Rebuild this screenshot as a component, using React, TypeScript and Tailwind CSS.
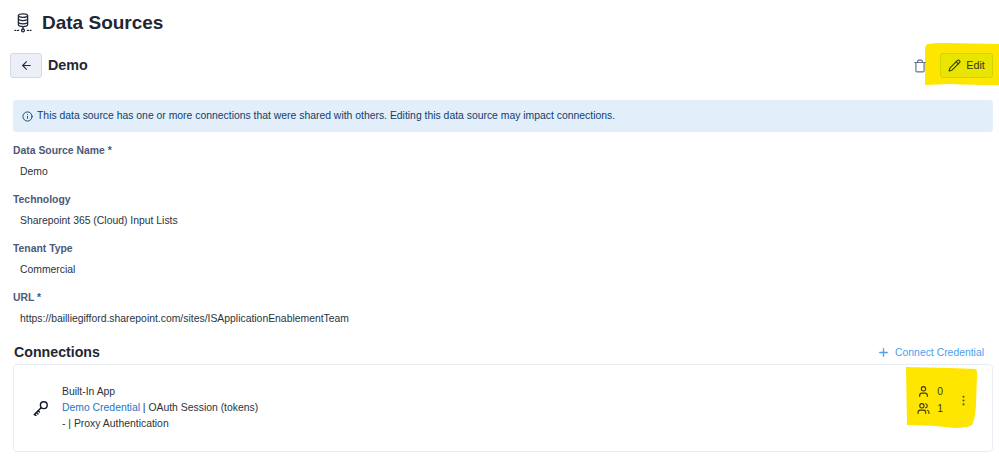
import { ArrowLeft, EllipsisVertical, Info, Pencil, Plus, Trash, User, Users } from 'lucide-react'

const FIELDS = [
  { label: 'Data Source Name *', value: 'Demo' },
  { label: 'Technology', value: 'Sharepoint 365 (Cloud) Input Lists' },
  { label: 'Tenant Type', value: 'Commercial' },
  { label: 'URL *', value: 'https://bailliegifford.sharepoint.com/sites/ISApplicationEnablementTeam' },
]

function DatabaseNodeIcon() {
  return (
    <svg width="18" height="20" viewBox="0 0 18 20" fill="none" stroke="#1f2937" strokeWidth="1.3" strokeLinecap="round">
      <ellipse cx="9" cy="2.6" rx="4.6" ry="1.8" />
      <path d="M4.4 2.6v9.2c0 1 2 1.8 4.6 1.8s4.6-.8 4.6-1.8V2.6" />
      <path d="M4.4 5.8c0 1 2 1.8 4.6 1.8s4.6-.8 4.6-1.8" />
      <path d="M4.4 9c0 1 2 1.8 4.6 1.8s4.6-.8 4.6-1.8" />
      <path d="M9 13.6v2.4" />
      <circle cx="9" cy="17.4" r="1.4" />
      <path d="M1 17.4h.8M3.6 17.4h1M13.4 17.4h1M16.2 17.4h.8" />
    </svg>
  )
}

function KeyIcon() {
  return (
    <svg width="16" height="16" viewBox="0 0 16 16" fill="none" stroke="#111827" strokeWidth="1.4" strokeLinecap="round">
      <circle cx="10.8" cy="5.2" r="3.4" />
      <path d="M8.4 7.6 1.4 14.4" />
      <path d="M3.4 12.4 5 14M1.4 14.4 3 15.6M5.2 10.8l1.2 1.2" />
    </svg>
  )
}

export default function App() {
  return (
    <div className="relative h-[464px] w-[999px] overflow-hidden bg-white font-['Liberation_Sans',sans-serif] text-[#1f2937]">
      {/* marker highlights */}
      <svg className="absolute left-0 top-0" width="999" height="464" viewBox="0 0 999 464">
        <path d="M928 44 Q934 43 945 43 L999 44 L999 85 Q970 85 950 84 L925 85 L925 50 Q925 45 928 44Z" fill="#ffe600" />
        <path d="M906 367 L950 368 L976 369 Q977 370 977 374 L976 405 Q975 420 972 425 Q968 428 955 428 L935 426 L907 425 Z" fill="#ffe600" />
      </svg>

      <div className="relative flex h-[45px] items-center gap-[10px] pl-[14px] pt-[1px]">
        <DatabaseNodeIcon />
        <h1 className="text-[19px] font-bold text-[#1f2733]">Data Sources</h1>
      </div>

      <div className="relative mt-[9px] flex h-[23px] items-center pl-[10px] pr-[6px]">
        <button className="flex h-[25px] w-[32px] items-center justify-center rounded-[3px] border border-[#d5d9e6] bg-[#eceff8]">
          <ArrowLeft className="h-[13px] w-[13px] text-[#1f2937]" />
        </button>
        <span className="ml-[6px] text-[14.3px] font-bold text-[#1f2733]">Demo</span>
        <div className="ml-auto flex items-center gap-[13px]">
          <Trash className="h-[14px] w-[14px] text-[#64708a]" />
          <button className="flex h-[25px] w-[53px] items-center justify-center gap-[5px] rounded-[3px] border border-[#d3d300] bg-[#e8e600] text-[10.8px] text-[#2e3a20]">
            <Pencil className="h-[13px] w-[13px]" />
            Edit
          </button>
        </div>
      </div>

      <div className="relative mx-[13px] mt-[23px] flex h-[32px] w-[980px] items-center gap-[4px] rounded-[3px] bg-[#e2eef9] px-[9px] text-[10.4px] text-[#0f3f6e]">
        <Info className="h-[11px] w-[11px] shrink-0" />
        This data source has one or more connections that were shared with others. Editing this data source may impact connections.
      </div>

      <div className="relative mt-[11px] flex flex-col pl-[13px]">
        {FIELDS.map((f) => (
          <div key={f.label} className="flex h-[49px] flex-col">
            <span className="text-[10.4px] leading-[16px] font-bold text-[#4a5a78]">{f.label}</span>
            <span className="mt-[5px] pl-[7px] text-[10.4px] leading-[16px] text-[#2a3340]">{f.value}</span>
          </div>
        ))}
      </div>

      <div className="relative mt-[3px] flex h-[22px] items-center justify-between pl-[14px] pr-[15px]">
        <h2 className="text-[14.2px] font-bold text-[#1f2733]">Connections</h2>
        <span className="flex items-center gap-[5px] text-[10.4px] text-[#4a9ef5]">
          <Plus className="h-[13px] w-[13px]" strokeWidth={2.4} />
          Connect Credential
        </span>
      </div>

      <div className="relative mx-[13px] flex h-[88px] w-[980px] items-center rounded-[4px] border border-[#e8ecf3] pl-[19px] pr-[22px]">
        <KeyIcon />
        <div className="ml-[13px] text-[10.4px] leading-[16px] text-[#2a3340]">
          <div>Built-In App</div>
          <div>
            <span className="text-[#1f74c9]">Demo Credential</span> | OAuth Session (tokens)
          </div>
          <div>- | Proxy Authentication</div>
        </div>
        <div className="mb-[16px] ml-auto flex items-center gap-[14px]">
          <div className="grid grid-cols-[14px_auto] items-center gap-x-[6px] gap-y-[2px] text-[10.4px] leading-[15px] text-[#3d3d10]">
            <User className="h-[13px] w-[13px]" />
            <span>0</span>
            <Users className="h-[13px] w-[13px]" />
            <span>1</span>
          </div>
          <EllipsisVertical className="h-[13px] w-[13px] text-[#5a5a20]" />
        </div>
      </div>
    </div>
  )
}
